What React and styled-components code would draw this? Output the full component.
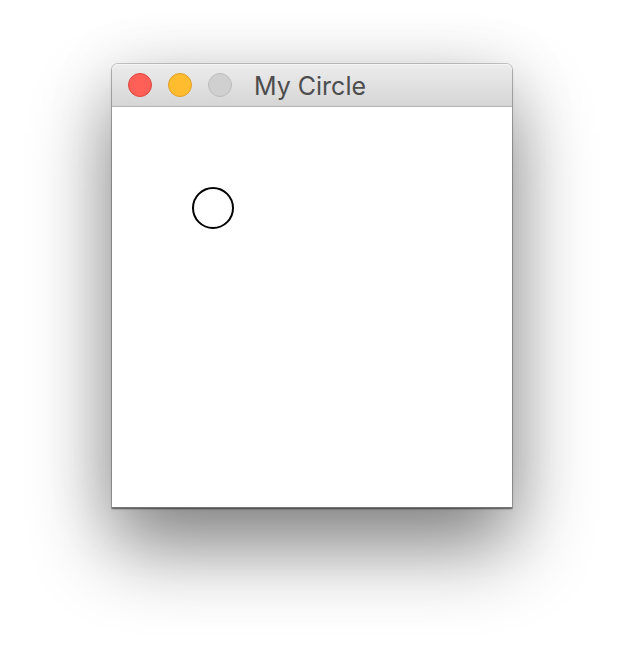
import React from "react";
import styled, { createGlobalStyle } from "styled-components";

const GlobalStyle = createGlobalStyle`
  html, body {
    margin: 0;
    padding: 0;
    background: #ffffff;
  }
`;

const Stage = styled.div`
  width: 624px;
  height: 668px;
  padding: 64px 0 0 112px;
  box-sizing: border-box;
  overflow: hidden;
`;

const Window = styled.div`
  width: 400px;
  height: 444px;
  display: flex;
  flex-direction: column;
  border-radius: 6px 6px 0 0;
  background: #ffffff;
  box-shadow:
    0 0 0 1px rgba(0, 0, 0, 0.18),
    0 1px 2px rgba(0, 0, 0, 0.45),
    0 40px 80px rgba(0, 0, 0, 0.45),
    0 10px 70px rgba(0, 0, 0, 0.12);
`;

const TitleBar = styled.div`
  height: 42px;
  flex-shrink: 0;
  display: flex;
  align-items: center;
  padding: 0 16px;
  gap: 16px;
  border-radius: 6px 6px 0 0;
  background: linear-gradient(to bottom, #ececec, #d6d6d6);
  border-bottom: 1px solid #b4b4b4;
  box-shadow: inset 0 1px 0 #f6f6f6;
`;

const Light = styled.span`
  width: 24px;
  height: 24px;
  box-sizing: border-box;
  border-radius: 50%;
  background: ${(p) => p.$fill};
  border: 1px solid ${(p) => p.$edge};
  flex-shrink: 0;
`;

const Title = styled.div`
  margin-left: 6px;
  font-family: Inter, "Liberation Sans", sans-serif;
  font-size: 25px;
  color: #4d4d4d;
  line-height: 1;
  padding-top: 3px;
`;

const Canvas = styled.div`
  flex: 1;
  background: #ffffff;
  border-bottom: 1px solid #777777;
  svg {
    display: block;
  }
`;

export default function App() {
  return (
    <>
      <GlobalStyle />
      <Stage>
        <Window>
          <TitleBar>
            <Light $fill="#fe5f57" $edge="#e2463f" />
            <Light $fill="#febc2e" $edge="#e0a126" />
            <Light $fill="#d0d0d0" $edge="#bdbdbd" />
            <Title>My Circle</Title>
          </TitleBar>
          <Canvas>
            <svg width="400" height="400" viewBox="0 0 400 400">
              <circle cx="101" cy="101" r="20" fill="none" stroke="#000" strokeWidth="2" />
            </svg>
          </Canvas>
        </Window>
      </Stage>
    </>
  );
}
